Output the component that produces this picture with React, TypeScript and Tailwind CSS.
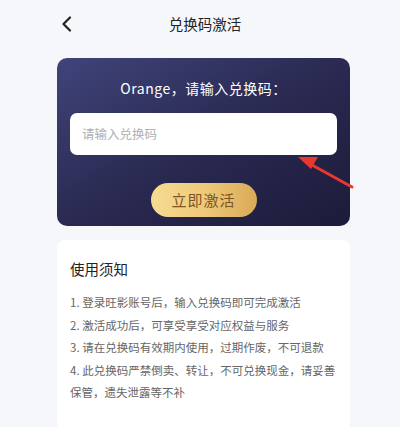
const font = { fontFamily: '"Noto Sans CJK SC", "Noto Sans", sans-serif' };

const notices = [
  '1. 登录旺影账号后，输入兑换码即可完成激活',
  '2. 激活成功后，可享受享受对应权益与服务',
  '3. 请在兑换码有效期内使用，过期作废，不可退款',
  '4. 此兑换码严禁倒卖、转让，不可兑换现金，请妥善保管，遗失泄露等不补',
];

export default function App() {
  return (
    <div className="relative h-[427px] w-[400px] overflow-hidden bg-[#f6f7fb]" style={font}>
      {/* Header */}
      <div className="flex h-[48px] items-center pl-[60px] pr-[50px]">
        <svg width="14" height="16" viewBox="0 0 14 16" className="shrink-0">
          <path d="M10 1.5 L3.5 8 L10 14.5" fill="none" stroke="#222" strokeWidth="2.2" strokeLinecap="round" strokeLinejoin="round" />
        </svg>
        <div className="flex-1 pr-[14px] text-center text-[14.5px] text-[#222]">兑换码激活</div>
      </div>

      <div className="ml-[57px] w-[293px] pt-[10px]">
        {/* Redeem card */}
        <div className="flex h-[168px] flex-col items-center rounded-[10px] bg-gradient-to-br from-[#40447a] via-[#2a2a52] to-[#1c1b3a] px-[13px] pt-[19px]">
          <div className="text-[14px] leading-[22px] tracking-[0.5px] text-white">Orange，请输入兑换码：</div>
          <div className="mt-[14px] flex h-[42px] w-full items-center rounded-[7px] bg-white px-[12px] text-[12.5px] text-[#b0b0b0]">
            请输入兑换码
          </div>
          <div className="mt-[28px] flex h-[34px] w-[106px] items-center justify-center rounded-full bg-gradient-to-r from-[#f6dc92] via-[#efc97a] to-[#d9aa58] text-[15px] tracking-[1px] text-[#7b5622]">
            立即激活
          </div>
        </div>

        {/* Notice card */}
        <div className="mt-[14px] h-[190px] rounded-[8px] bg-white px-[13px] pt-[18px]">
          <div className="text-[14.5px] leading-[22px] text-[#222]">使用须知</div>
          <div className="mt-[11px] flex flex-col">
            {notices.map((n) => (
              <div key={n} className="text-[11.5px] leading-[22.5px] text-[#666]">
                {n}
              </div>
            ))}
          </div>
        </div>
      </div>

      {/* Annotation arrow */}
      <svg className="absolute left-0 top-0" width="400" height="427" viewBox="0 0 400 427">
        <path d="M352 187 L312 165" stroke="#e8382e" strokeWidth="3" strokeLinecap="round" />
        <path d="M298 157 L318 157 L311 169 Z" fill="#e8382e" />
      </svg>
    </div>
  );
}
